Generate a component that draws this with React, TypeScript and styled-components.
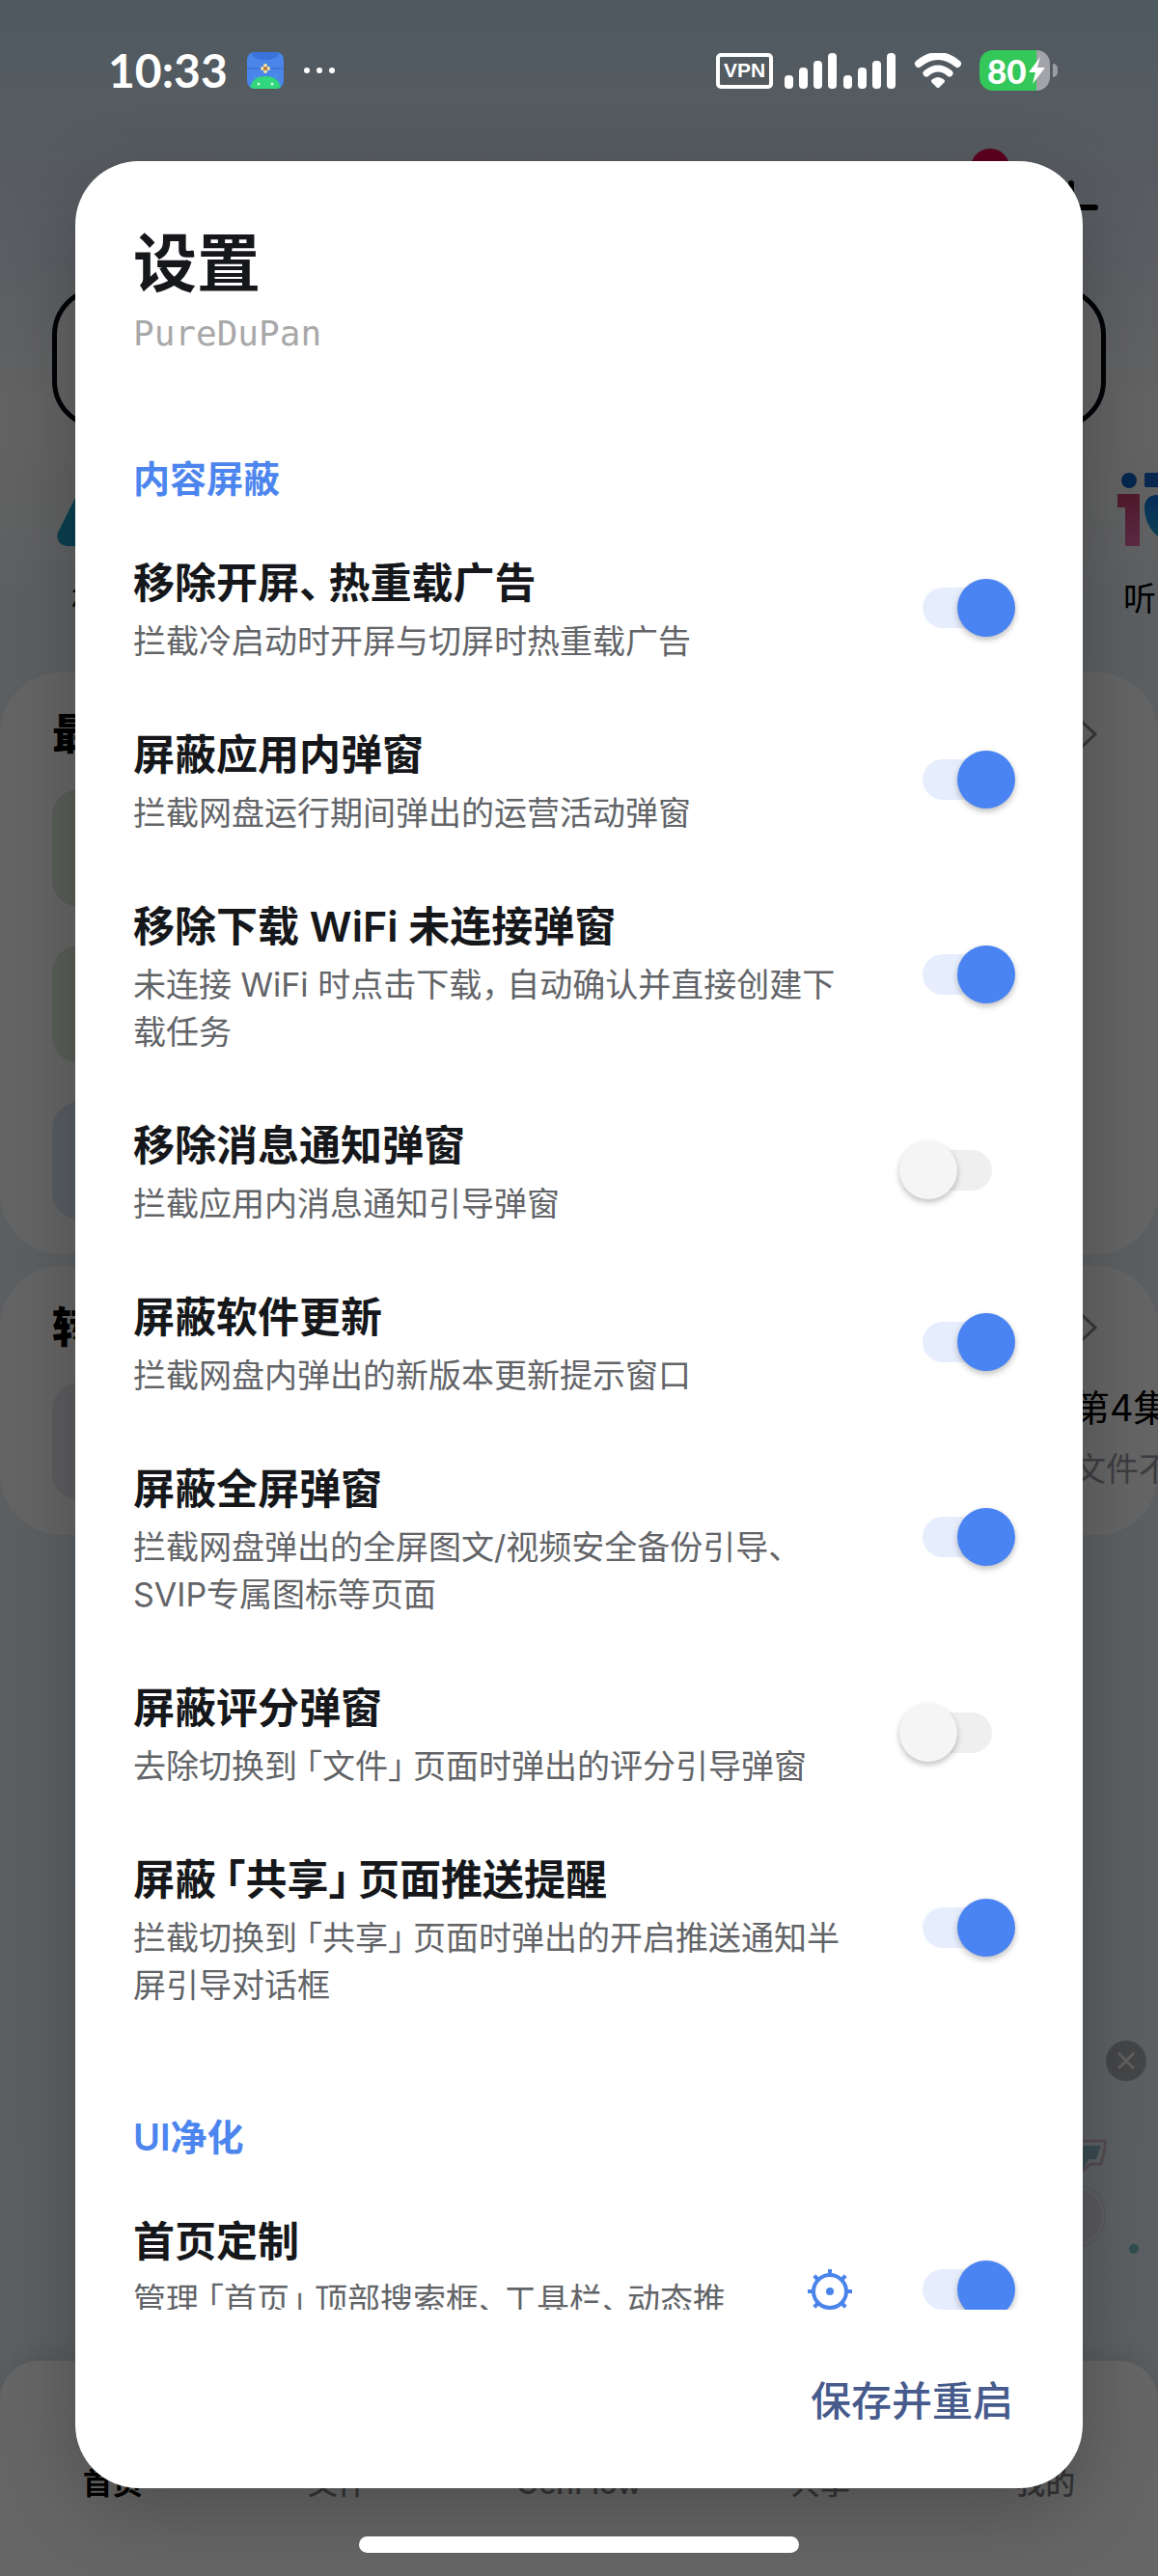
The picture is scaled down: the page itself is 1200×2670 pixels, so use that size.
import React, { useState } from 'react';
import styled, { createGlobalStyle } from 'styled-components';

const GlobalStyle = createGlobalStyle`
  *, *::before, *::after { box-sizing: border-box; }
  body {
    margin: 0;
    font-family: Inter, "Noto Sans CJK SC", sans-serif;
    color: #15171a;
  }
  h1, h2, h3, p { margin: 0; }
  button, input { font: inherit; }
`;

const Screen = styled.div`
  position: relative;
  height: 100vh;
  overflow: hidden;
`;

/* ---------- Home page behind the dialog ---------- */

const Home = styled.div`
  height: 100%;
  display: flex;
  flex-direction: column;
  background: linear-gradient(180deg, #c5e2f2 0, #d8e4f2 140px, #e4ebf7 260px, #f8f8f8 420px, #f6f6f6 500px, #e8f0f8 620px, #e6f0f8 1700px, #eaf2f8 100%);
`;

const TopActions = styled.div`
  display: flex;
  justify-content: flex-end;
  padding: 154px 62px 0 0;
  height: 297px;
  flex-shrink: 0;
`;

const SearchField = styled.input`
  margin: 0 54px;
  height: 148px;
  flex-shrink: 0;
  padding: 0 48px;
  border: 5px solid #05080f;
  border-radius: 50px;
  background: #fafafa;
`;

const Shortcuts = styled.div`
  display: flex;
  justify-content: space-between;
  padding: 41px 0 51px 58px;
  margin-right: -6px;
  flex-shrink: 0;
`;

const Shortcut = styled.div<{ $width: number }>`
  width: ${(p) => p.$width}px;
  display: flex;
  flex-direction: column;
  align-items: center;
  gap: 26px;
  font-size: 34px;
  line-height: 50px;
  color: #000;
`;

const Card = styled.section`
  padding: 39px 54px 36px;
  margin-bottom: 12px;
  border-radius: 64px;
  background: #fdfdfd;
  flex-shrink: 0;
  display: flex;
  flex-direction: column;
  gap: 32px;
`;

const CardHead = styled.div`
  display: flex;
  justify-content: space-between;
  align-items: center;
  padding-right: 8px;
`;

const CardTitle = styled.h2`
  font-size: 44px;
  font-weight: 900;
  line-height: 50px;
  color: #000;
`;

const TileList = styled.div`
  display: flex;
  flex-direction: column;
  gap: 40px;
`;

const Tile = styled.div<{ $color: string }>`
  width: 122px;
  height: 122px;
  border-radius: 28px;
  background: ${(p) => p.$color};
`;

const FileRow = styled.div`
  display: flex;
  justify-content: space-between;
`;

const FileText = styled.div`
  width: 34px;
  display: flex;
  flex-direction: column;
  gap: 12px;
  white-space: nowrap;
`;

const FileName = styled.p`
  font-size: 38px;
  line-height: 52px;
  color: #000;
`;

const FileNote = styled.p`
  font-size: 34px;
  line-height: 52px;
  color: #9a9aa2;
`;

const Promo = styled.div`
  margin-top: auto;
  align-self: flex-end;
  height: 347px;
  flex-shrink: 0;
`;

const TabBar = styled.nav`
  height: 223px;
  flex-shrink: 0;
  display: grid;
  grid-template-columns: 7fr 7fr 8fr 7fr 7fr;
  padding-top: 104px;
  border-radius: 40px 40px 0 0;
  background: #ffffff;
  box-shadow: 0 -6px 24px rgba(60, 50, 70, 0.12);
`;

const Tab = styled.a<{ $active?: boolean }>`
  text-align: center;
  text-decoration: none;
  font-size: 31px;
  line-height: 46px;
  font-weight: ${(p) => (p.$active ? 700 : 500)};
  color: ${(p) => (p.$active ? '#000' : '#85868a')};
`;

/* ---------- Status bar ---------- */

const StatusBar = styled.header`
  position: absolute;
  inset: 0 0 auto 0;
  height: 146px;
  padding: 0 104px 0 112px;
  display: flex;
  align-items: center;
  justify-content: space-between;
  color: #fff;
`;

const StatusGroup = styled.div<{ $gap: number }>`
  display: flex;
  align-items: center;
  gap: ${(p) => p.$gap}px;
`;

const Clock = styled.time`
  font-family: Lato, sans-serif;
  font-size: 48px;
  line-height: 50px;
  font-weight: 700;
`;

const VpnBadge = styled.span`
  width: 59px;
  height: 37px;
  display: flex;
  align-items: center;
  justify-content: center;
  border: 4px solid #fff;
  border-radius: 5px;
  font-family: "Liberation Sans", sans-serif;
  font-size: 21px;
  line-height: 24px;
  font-weight: 700;
`;

const Battery = styled.div`
  display: flex;
  align-items: center;
  gap: 3px;
  &::after {
    content: '';
    width: 5px;
    height: 14px;
    border-radius: 0 7px 7px 0;
    background: #9a9da3;
  }
`;

const BatteryBody = styled.span`
  width: 73px;
  height: 42px;
  padding-left: 8px;
  display: flex;
  align-items: center;
  gap: 2px;
  border-radius: 14px;
  background: linear-gradient(90deg, #34c759 0 59px, #a3a4aa 59px);
  font-family: Lato, sans-serif;
  font-size: 35px;
  line-height: 42px;
  font-weight: 900;
`;

/* ---------- Dialog ---------- */

const Scrim = styled.div`
  position: absolute;
  inset: 0;
  display: flex;
  padding: 167px 78px 91px;
  background: rgba(0, 0, 0, 0.6);
`;

const Dialog = styled.section`
  flex: 1;
  min-width: 0;
  display: flex;
  flex-direction: column;
  border-radius: 66px;
  background: #fff;
  box-shadow: 0 24px 80px rgba(0, 0, 0, 0.24);
`;

const DialogHeader = styled.header`
  padding: 68px 60px 0;
`;

const DialogTitle = styled.h1`
  font-size: 66px;
  line-height: 76px;
  font-weight: 700;
`;

const DialogSubtitle = styled.p`
  margin-top: 10px;
  font-family: "DejaVu Sans Mono", monospace;
  font-size: 36px;
  line-height: 50px;
  color: #a8a8a8;
`;

const DialogBody = styled.div`
  flex: 1;
  min-height: 0;
  overflow-y: auto;
  scrollbar-width: none;
  margin-top: 50px;
  padding: 47px 70px 0 60px;
  display: flex;
  flex-direction: column;
  gap: 105px;
`;

const DialogFooter = styled.footer`
  display: flex;
  justify-content: flex-end;
  padding: 61px 72px 56px;
`;

const SaveButton = styled.button`
  border: 0;
  padding: 0;
  background: none;
  font-size: 42px;
  line-height: 68px;
  font-weight: 500;
  color: #465a8c;
`;

const Group = styled.section`
  display: flex;
  flex-direction: column;
`;

const GroupTitle = styled.h2`
  margin-bottom: 50px;
  font-size: 38px;
  line-height: 56px;
  font-weight: 600;
  color: #4c85ee;
`;

const RowList = styled.div`
  display: flex;
  flex-direction: column;
  gap: 63px;
`;

const Row = styled.div<{ $tall?: boolean }>`
  display: flex;
  align-items: center;
  min-height: ${(p) => (p.$tall ? 164 : 0)}px;
`;

const RowText = styled.div`
  flex: 1;
  min-width: 0;
  align-self: flex-start;
  margin-right: 50px;
`;

const RowTitle = styled.label`
  display: block;
  font-size: 43px;
  line-height: 60px;
  font-weight: 600;
`;

const RowNote = styled.p`
  margin-top: 6px;
  font-size: 34px;
  line-height: 49px;
  color: #626468;
`;

const Punct = styled.span<{ $opening: boolean }>`
  font-feature-settings: "halt";
  line-height: 1;
  ${(p) => (p.$opening ? 'padding-left' : 'padding-right')}: 9px;
`;

const GearButton = styled.button`
  width: 64px;
  height: 64px;
  margin-right: 40px;
  padding: 0;
  border: 0;
  background: none;
  display: grid;
  place-items: center;
`;

const Switch = styled.input`
  appearance: none;
  flex-shrink: 0;
  width: 120px;
  height: 60px;
  margin: 0 0 4px;
  display: grid;
  align-items: center;
  &::before, &::after {
    content: '';
    grid-area: 1 / 1;
  }
  &::before {
    width: 72px;
    height: 42px;
    justify-self: center;
    border-radius: 21px;
    background: #efefef;
  }
  &::after {
    width: 60px;
    height: 60px;
    justify-self: start;
    border-radius: 50%;
    background: #f5f5f5;
    box-shadow: 0 3px 6px rgba(0, 0, 0, 0.26);
  }
  &:checked::before { background: #e6edfd; }
  &:checked::after {
    justify-self: end;
    background: #4a84f2;
  }
`;

const HomeIndicator = styled.div`
  position: absolute;
  bottom: 24px;
  left: 31%;
  right: 31%;
  height: 17px;
  border-radius: 9px;
  background: #fff;
`;

type Item = { id: string; title: string; note: string; on: boolean; gear?: boolean };

const groups: { title: string; items: Item[] }[] = [
  {
    title: '内容屏蔽',
    items: [
      { id: 'splash', title: '移除开屏、热重载广告', note: '拦截冷启动时开屏与切屏时热重载广告', on: true },
      { id: 'popup', title: '屏蔽应用内弹窗', note: '拦截网盘运行期间弹出的运营活动弹窗', on: true },
      { id: 'wifi', title: '移除下载 WiFi 未连接弹窗', note: '未连接 WiFi 时点击下载，自动确认并直接创建下载任务', on: true },
      { id: 'notice', title: '移除消息通知弹窗', note: '拦截应用内消息通知引导弹窗', on: false },
      { id: 'update', title: '屏蔽软件更新', note: '拦截网盘内弹出的新版本更新提示窗口', on: true },
      { id: 'full', title: '屏蔽全屏弹窗', note: '拦截网盘弹出的全屏图文/视频安全备份引导、SVIP专属图标等页面', on: true },
      { id: 'rate', title: '屏蔽评分弹窗', note: '去除切换到「文件」页面时弹出的评分引导弹窗', on: false },
      { id: 'share', title: '屏蔽「共享」页面推送提醒', note: '拦截切换到「共享」页面时弹出的开启推送通知半屏引导对话框', on: true },
    ],
  },
  {
    title: 'UI净化',
    items: [
      { id: 'home', title: '首页定制', note: '管理「首页」顶部搜索框、工具栏、动态推', on: true, gear: true },
    ],
  },
];

function Typeset({ text }: { text: string }) {
  return (
    <>
      {text.split(/([「」、，])/).map((part, i) =>
        i % 2 ? (
          <Punct key={i} $opening={part === '「'}>{part}</Punct>
        ) : (
          part
        ),
      )}
    </>
  );
}

function Chevron() {
  return (
    <svg width="20" height="32" viewBox="0 0 20 32" fill="none" stroke="#8a8a8a" strokeWidth="3">
      <path d="M2 2 L17 16 L2 30" />
    </svg>
  );
}

function GearIcon() {
  const teeth = [0, 45, 90, 135, 180, 225, 270, 315];
  return (
    <svg width="46" height="46" viewBox="0 0 46 46" fill="none" stroke="#4a84ea" strokeWidth="4">
      <circle cx="23" cy="23" r="17" />
      <circle cx="23" cy="23" r="4" fill="#4a84ea" stroke="none" />
      {teeth.map((a) => (
        <path key={a} d="M23 6 V0" transform={`rotate(${a} 23 23)`} />
      ))}
    </svg>
  );
}

function SignalIcon() {
  return (
    <svg width="55" height="37" viewBox="0 0 55 37" fill="#fff">
      <rect x="0" y="23" width="9" height="14" rx="4" />
      <rect x="15" y="15" width="9" height="22" rx="4" />
      <rect x="30" y="8" width="9" height="29" rx="4" />
      <rect x="45" y="0" width="9" height="37" rx="4" />
    </svg>
  );
}

function WifiIcon() {
  return (
    <svg width="50" height="37" viewBox="0 0 50 37" fill="none" stroke="#fff" strokeLinecap="round">
      <path d="M5 11 Q25 -5 45 11" strokeWidth="8" />
      <path d="M13 21 Q25 11 37 21" strokeWidth="7" />
      <path d="M20 29 Q25 25 30 29 L25 34 Z" strokeWidth="4" strokeLinejoin="round" fill="#fff" />
    </svg>
  );
}

function AppIcon() {
  return (
    <svg width="38" height="38" viewBox="0 0 38 38">
      <defs>
        <clipPath id="tile"><rect width="38" height="38" rx="8" /></clipPath>
      </defs>
      <g clipPath="url(#tile)">
        <rect width="38" height="38" fill="#4a86ea" />
        <path d="M4 0 H34 Q32 8 19 8 Q6 8 4 0Z" fill="#3b73dc" />
        <path d="M0 17 H38" stroke="#3566c4" strokeWidth="1" />
        <path d="M3 38 Q5 25 19 25 Q33 25 35 38Z" fill="#32d67c" />
        <path d="M9 27 L7 23 M29 27 L31 23" stroke="#4aa2d8" strokeWidth="1" />
        <circle cx="12" cy="33" r="1.5" fill="#c8ffe0" />
        <circle cx="26" cy="33" r="1.5" fill="#c8ffe0" />
        <circle cx="19" cy="14" r="2" fill="#f4e3a0" />
        <circle cx="19" cy="20" r="2" fill="#f4e3a0" />
        <circle cx="16" cy="17" r="2" fill="#f4e3a0" />
        <circle cx="22" cy="17" r="2" fill="#f4e3a0" />
        <circle cx="19" cy="17" r="2" fill="#b9782c" />
      </g>
    </svg>
  );
}

function SettingRow({ item }: { item: Item }) {
  const [on, setOn] = useState(item.on);
  return (
    <Row $tall={item.gear}>
      <RowText>
        <RowTitle htmlFor={item.id}><Typeset text={item.title} /></RowTitle>
        <RowNote id={`${item.id}-note`}><Typeset text={item.note} /></RowNote>
      </RowText>
      {item.gear && (
        <GearButton type="button" aria-label={item.title}><GearIcon /></GearButton>
      )}
      <Switch
        id={item.id}
        type="checkbox"
        role="switch"
        aria-describedby={`${item.id}-note`}
        checked={on}
        onChange={(e) => setOn(e.target.checked)}
      />
    </Row>
  );
}

function HomePage() {
  return (
    <Home>
      <TopActions>
        <svg width="136" height="92" viewBox="0 0 136 92">
          <circle cx="24" cy="20" r="20" fill="#e8004f" />
          <path d="M108 36 V86 M83 61 H133" stroke="#000" strokeWidth="6" strokeLinecap="round" />
        </svg>
      </TopActions>
      <SearchField type="search" aria-label="搜索" />
      <Shortcuts>
        <Shortcut $width={66}>
          <svg width="66" height="84" viewBox="0 0 66 84">
            <path d="M2 66 L22 26 Q34 8 46 26 L66 80 H12 Q-1 78 2 66Z" fill="#1d9fc9" />
          </svg>
          相
        </Shortcut>
        <Shortcut $width={50}>
          <svg width="46" height="84" viewBox="0 0 46 84">
            <defs>
              <linearGradient id="pink" x1="0" y1="0" x2="0" y2="1">
                <stop offset="0" stopColor="#c8406e" />
                <stop offset="1" stopColor="#e66aa8" />
              </linearGradient>
              <linearGradient id="blue" x1="0" y1="0" x2="0" y2="1">
                <stop offset="0" stopColor="#1470dc" />
                <stop offset="1" stopColor="#22a8d8" />
              </linearGradient>
            </defs>
            <circle cx="12" cy="12" r="8" fill="#0a62c4" />
            <path d="M0 26 H23 V80 H8 V40 H0Z" fill="url(#pink)" />
            <rect x="28" y="4" width="30" height="15" rx="2" fill="#1c66c8" />
            <path d="M46 27 H40 Q28 28 28 41 Q29 62 46 73Z" fill="url(#blue)" />
          </svg>
          听
        </Shortcut>
      </Shortcuts>
      <Card>
        <CardHead><CardTitle>最</CardTitle><Chevron /></CardHead>
        <TileList>
          <Tile $color="#dfeadb" />
          <Tile $color="#dfeadb" />
          <Tile $color="#dbe8f4" />
        </TileList>
      </Card>
      <Card>
        <CardHead><CardTitle>转</CardTitle><Chevron /></CardHead>
        <FileRow>
          <Tile $color="#e9e8f1" />
          <FileText>
            <FileName>第4集</FileName>
            <FileNote>文件不</FileNote>
          </FileText>
        </FileRow>
      </Card>
      <Promo>
        <svg width="100" height="250" viewBox="0 0 100 250">
          <circle cx="67" cy="36" r="21" fill="#acb0b4" />
          <path d="M59 28 L75 44 M75 28 L59 44" stroke="#eee" strokeWidth="3" />
          <path d="M16 119 H45 V126 L41 143 H30 L22 150" fill="none" stroke="#d3bcc8" strokeWidth="3" />
          <path d="M16 124 H41 L36 138 H28 L23 148 H16Z" fill="#8fbccb" />
          <path d="M20 167 Q44 166 45 198 Q44 224 22 227" fill="none" stroke="#d8d2da" strokeWidth="1" />
          <path d="M20 170 Q42 176 42 198 Q40 220 20 224Z" fill="#e0e2ea" />
          <circle cx="75" cy="231" r="5" fill="#79c3cb" />
        </svg>
      </Promo>
      <TabBar>
        <Tab href="#home" $active>首页</Tab>
        <Tab href="#files">文件</Tab>
        <Tab href="#genflow">GenFlow</Tab>
        <Tab href="#share">共享</Tab>
        <Tab href="#me">我的</Tab>
      </TabBar>
    </Home>
  );
}

export default function App() {
  return (
    <Screen lang="zh-CN">
      <GlobalStyle />
      <HomePage />
      <Scrim>
        <Dialog role="dialog" aria-labelledby="dialog-title">
          <DialogHeader>
            <DialogTitle id="dialog-title">设置</DialogTitle>
            <DialogSubtitle>PureDuPan</DialogSubtitle>
          </DialogHeader>
          <DialogBody>
            {groups.map((g) => (
              <Group key={g.title}>
                <GroupTitle>{g.title}</GroupTitle>
                <RowList>
                  {g.items.map((item) => <SettingRow key={item.id} item={item} />)}
                </RowList>
              </Group>
            ))}
          </DialogBody>
          <DialogFooter>
            <SaveButton type="button">保存并重启</SaveButton>
          </DialogFooter>
        </Dialog>
      </Scrim>
      <StatusBar>
        <StatusGroup $gap={20}>
          <Clock>10:33</Clock>
          <AppIcon />
          <svg width="34" height="8" viewBox="0 0 34 8" fill="#fff">
            <circle cx="4" cy="4" r="3" />
            <circle cx="17" cy="4" r="3" />
            <circle cx="30" cy="4" r="3" />
          </svg>
        </StatusGroup>
        <StatusGroup $gap={18}>
          <StatusGroup $gap={12}>
            <VpnBadge>VPN</VpnBadge>
            <StatusGroup $gap={6}>
              <SignalIcon />
              <SignalIcon />
            </StatusGroup>
          </StatusGroup>
          <WifiIcon />
          <Battery>
            <BatteryBody>
              80
              <svg width="18" height="28" viewBox="0 0 18 28" fill="#fff">
                <path d="M12 0 L0 16 H7 L4 28 L17 11 H9Z" />
              </svg>
            </BatteryBody>
          </Battery>
        </StatusGroup>
      </StatusBar>
      <HomeIndicator />
    </Screen>
  );
}
